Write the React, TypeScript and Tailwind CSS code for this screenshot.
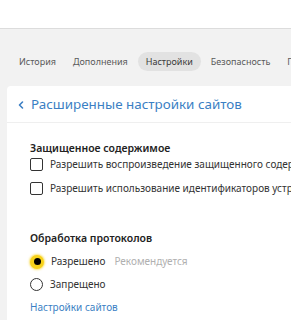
import React from "react";

export default function App() {
  const font = { fontFamily: '"Noto Sans", "Open Sans", sans-serif' };
  return (
    <div className="w-[291px] h-[320px] overflow-hidden bg-[#f2f2f2] flex flex-col" style={font}>
      <div className="h-[29px] bg-white border-b border-[#dcdcdc] shrink-0" />
      <div className="h-[57px] shrink-0 flex items-center pl-[19px] gap-[17px] text-[9px] text-[#5a5a5a] whitespace-nowrap pt-[8px]">
        <span>История</span>
        <span>Дополнения</span>
        <span className="bg-[#e2e2e2] rounded-full px-[8px] py-[3px] -mx-[7px] text-[#3a3a3a]">Настройки</span>
        <span>Безопасность</span>
        <span>Пароли</span>
      </div>
      <div className="flex-1 ml-[7px] bg-white rounded-tl-[4px] flex flex-col">
        <div className="h-[37px] flex items-center pl-[10px] gap-[6px] text-[13.4px] text-[#3b7fc4] border-b border-[#efefef] whitespace-nowrap">
          <svg width="8" height="10" viewBox="0 0 8 10" className="mt-[1px]">
            <path d="M5.5 2 L2.5 5 L5.5 8" stroke="#3b7fc4" strokeWidth="1.6" fill="none" strokeLinecap="round" strokeLinejoin="round" />
          </svg>
          <span>Расширенные настройки сайтов</span>
        </div>
        <div className="pl-[23px] pt-[17px] whitespace-nowrap text-[10px] text-[#222]">
          <div className="font-semibold text-[10.5px] h-[16px] leading-[16px]">Защищенное содержимое</div>
          <div className="flex items-center gap-[7px] h-[24px] -mt-[4px]">
            <div className="w-[13px] h-[13px] border-[1.5px] border-[#333] rounded-[2px] shrink-0" />
            <span className="text-[#333]">Разрешить воспроизведение защищенного содержимого</span>
          </div>
          <div className="flex items-center gap-[7px] h-[24px]">
            <div className="w-[13px] h-[13px] border-[1.5px] border-[#333] rounded-[2px] shrink-0" />
            <span className="text-[#333]">Разрешить использование идентификаторов устройств</span>
          </div>
          <div className="font-semibold text-[10.5px] h-[16px] leading-[16px] mt-[30px]">Обработка протоколов</div>
          <div className="flex items-center gap-[7px] h-[23px] mt-[4px]">
            <div className="w-[14px] h-[14px] rounded-full bg-[#f7d21c] flex items-center justify-center shrink-0 shadow-[0_0_2px_1px_rgba(247,210,28,0.6)]">
              <div className="w-[7px] h-[7px] rounded-full bg-black" />
            </div>
            <span className="text-[#333]">Разрешено</span>
            <span className="text-[#b0b0b0] ml-[2px]">Рекомендуется</span>
          </div>
          <div className="flex items-center gap-[7px] h-[23px]">
            <div className="w-[13px] h-[13px] rounded-full border-[1.5px] border-[#333] shrink-0" />
            <span className="text-[#333]">Запрещено</span>
          </div>
          <div className="text-[#3b7fc4] h-[22px] leading-[22px]">Настройки сайтов</div>
        </div>
      </div>
    </div>
  );
}
